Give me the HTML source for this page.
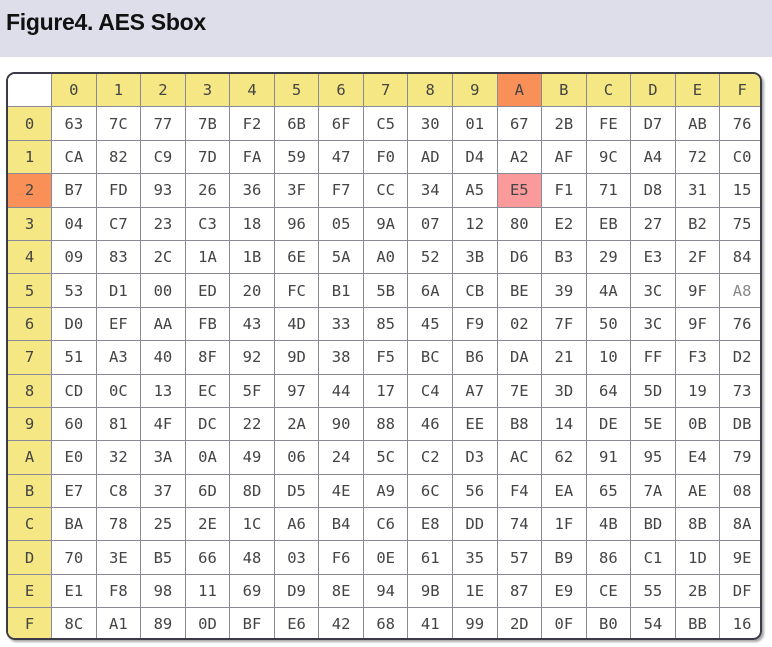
<!DOCTYPE html>
<html><head><meta charset="utf-8"><style>
html,body{margin:0;padding:0;background:#fff;width:772px;height:647px;overflow:hidden}
.hd{position:absolute;left:0;top:0;width:772px;height:57px;background:#dedeea}
.hd h1{margin:0;position:absolute;left:6px;top:9px;font:bold 23px "Liberation Sans",sans-serif;color:#111;letter-spacing:-0.3px}
.wrap{position:absolute;left:6px;top:72px;width:756px;height:568px;border:2px solid #3a3a48;border-radius:9px;overflow:hidden;box-sizing:border-box;box-shadow:2px 2px 2px rgba(0,0,0,.35)}
table{border-collapse:collapse;table-layout:fixed;width:758px;margin:-1px 0 0 -1px}
tr{height:33.4px}
td{border:1px solid #8a8a96;height:33.4px;padding:0;text-align:center;font:15.5px "DejaVu Sans Mono","Liberation Mono",monospace;color:#444;box-sizing:border-box}
td.h{background:#f5e784}
td.o{background:#f89058}
td.p{background:#fa9a9a}
td.c{background:#fff}
</style></head><body>
<div class="hd"><h1>Figure4. AES Sbox</h1></div>
<div class="wrap"><table>
<colgroup><col style="width:44px"><col span="16" style="width:44.5px"></colgroup>
<tr><td class="c"></td><td class="h">0</td><td class="h">1</td><td class="h">2</td><td class="h">3</td><td class="h">4</td><td class="h">5</td><td class="h">6</td><td class="h">7</td><td class="h">8</td><td class="h">9</td><td class="o">A</td><td class="h">B</td><td class="h">C</td><td class="h">D</td><td class="h">E</td><td class="h">F</td></tr>
<tr><td class="h">0</td><td>63</td><td>7C</td><td>77</td><td>7B</td><td>F2</td><td>6B</td><td>6F</td><td>C5</td><td>30</td><td>01</td><td>67</td><td>2B</td><td>FE</td><td>D7</td><td>AB</td><td>76</td></tr>
<tr><td class="h">1</td><td>CA</td><td>82</td><td>C9</td><td>7D</td><td>FA</td><td>59</td><td>47</td><td>F0</td><td>AD</td><td>D4</td><td>A2</td><td>AF</td><td>9C</td><td>A4</td><td>72</td><td>C0</td></tr>
<tr><td class="o">2</td><td>B7</td><td>FD</td><td>93</td><td>26</td><td>36</td><td>3F</td><td>F7</td><td>CC</td><td>34</td><td>A5</td><td class="p">E5</td><td>F1</td><td>71</td><td>D8</td><td>31</td><td>15</td></tr>
<tr><td class="h">3</td><td>04</td><td>C7</td><td>23</td><td>C3</td><td>18</td><td>96</td><td>05</td><td>9A</td><td>07</td><td>12</td><td>80</td><td>E2</td><td>EB</td><td>27</td><td>B2</td><td>75</td></tr>
<tr><td class="h">4</td><td>09</td><td>83</td><td>2C</td><td>1A</td><td>1B</td><td>6E</td><td>5A</td><td>A0</td><td>52</td><td>3B</td><td>D6</td><td>B3</td><td>29</td><td>E3</td><td>2F</td><td>84</td></tr>
<tr><td class="h">5</td><td>53</td><td>D1</td><td>00</td><td>ED</td><td>20</td><td>FC</td><td>B1</td><td>5B</td><td>6A</td><td>CB</td><td>BE</td><td>39</td><td>4A</td><td>3C</td><td>9F</td><td style="color:#888">A8</td></tr>
<tr><td class="h">6</td><td>D0</td><td>EF</td><td>AA</td><td>FB</td><td>43</td><td>4D</td><td>33</td><td>85</td><td>45</td><td>F9</td><td>02</td><td>7F</td><td>50</td><td>3C</td><td>9F</td><td>76</td></tr>
<tr><td class="h">7</td><td>51</td><td>A3</td><td>40</td><td>8F</td><td>92</td><td>9D</td><td>38</td><td>F5</td><td>BC</td><td>B6</td><td>DA</td><td>21</td><td>10</td><td>FF</td><td>F3</td><td>D2</td></tr>
<tr><td class="h">8</td><td>CD</td><td>0C</td><td>13</td><td>EC</td><td>5F</td><td>97</td><td>44</td><td>17</td><td>C4</td><td>A7</td><td>7E</td><td>3D</td><td>64</td><td>5D</td><td>19</td><td>73</td></tr>
<tr><td class="h">9</td><td>60</td><td>81</td><td>4F</td><td>DC</td><td>22</td><td>2A</td><td>90</td><td>88</td><td>46</td><td>EE</td><td>B8</td><td>14</td><td>DE</td><td>5E</td><td>0B</td><td>DB</td></tr>
<tr><td class="h">A</td><td>E0</td><td>32</td><td>3A</td><td>0A</td><td>49</td><td>06</td><td>24</td><td>5C</td><td>C2</td><td>D3</td><td>AC</td><td>62</td><td>91</td><td>95</td><td>E4</td><td>79</td></tr>
<tr><td class="h">B</td><td>E7</td><td>C8</td><td>37</td><td>6D</td><td>8D</td><td>D5</td><td>4E</td><td>A9</td><td>6C</td><td>56</td><td>F4</td><td>EA</td><td>65</td><td>7A</td><td>AE</td><td>08</td></tr>
<tr><td class="h">C</td><td>BA</td><td>78</td><td>25</td><td>2E</td><td>1C</td><td>A6</td><td>B4</td><td>C6</td><td>E8</td><td>DD</td><td>74</td><td>1F</td><td>4B</td><td>BD</td><td>8B</td><td>8A</td></tr>
<tr><td class="h">D</td><td>70</td><td>3E</td><td>B5</td><td>66</td><td>48</td><td>03</td><td>F6</td><td>0E</td><td>61</td><td>35</td><td>57</td><td>B9</td><td>86</td><td>C1</td><td>1D</td><td>9E</td></tr>
<tr><td class="h">E</td><td>E1</td><td>F8</td><td>98</td><td>11</td><td>69</td><td>D9</td><td>8E</td><td>94</td><td>9B</td><td>1E</td><td>87</td><td>E9</td><td>CE</td><td>55</td><td>2B</td><td>DF</td></tr>
<tr><td class="h">F</td><td>8C</td><td>A1</td><td>89</td><td>0D</td><td>BF</td><td>E6</td><td>42</td><td>68</td><td>41</td><td>99</td><td>2D</td><td>0F</td><td>B0</td><td>54</td><td>BB</td><td>16</td></tr>
</table></div>
</body></html>
